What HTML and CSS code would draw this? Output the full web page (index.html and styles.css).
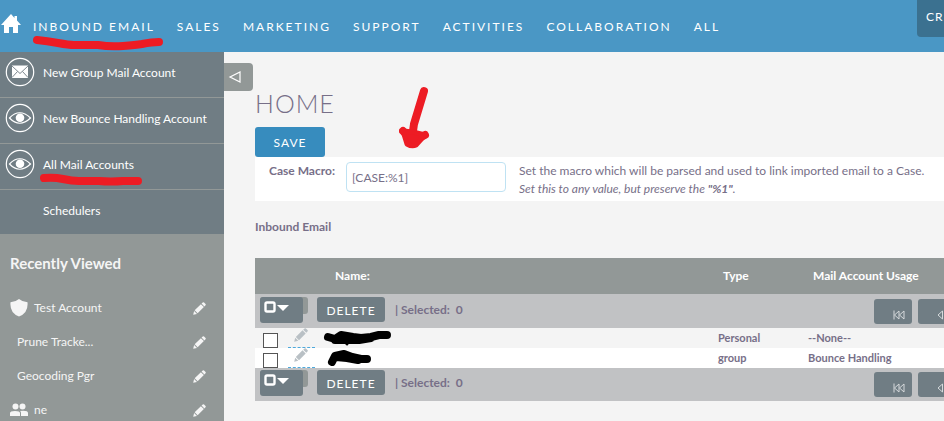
FILE: index.html
```html
<!DOCTYPE html>
<html lang="en">
<head>
<meta charset="utf-8">
<title>Inbound Email</title>
<link rel="stylesheet" href="styles.css">
</head>
<body>
<svg class="sprite" aria-hidden="true">
  <symbol id="pencil" viewBox="0 0 14 14"><path d="M0.2 13.8 1.2 9.7 4.3 12.8ZM1.8 9 8.5 2.3 11.7 5.5 5 12.2ZM9.2 1.7 10.5 0.5Q11.3 -.1 11.9 0.5L13.5 2.1Q14.1 2.7 13.5 3.5L12.3 4.8Z" fill="currentColor"/></symbol>
  <symbol id="eye" viewBox="0 0 30 30"><circle cx="15" cy="15" r="13.7" fill="none" stroke="#fff" stroke-width="1.2"/><path d="M4.5 15Q14.5 4.5 25.5 15Q14.5 25.5 4.5 15Z" fill="none" stroke="#fff" stroke-width="1.2"/><circle cx="15" cy="14.8" r="4.3" fill="#fff"/></symbol>
  <symbol id="mail" viewBox="0 0 30 30"><circle cx="15" cy="15" r="13.7" fill="none" stroke="#fff" stroke-width="1.2"/><path d="M7 8.5H23V21H7Z" fill="#fff"/><path d="M7 9 15 16.5 23 9M7 20.5 12.5 14.5M23 20.5 17.5 14.5" fill="none" stroke="#707d84" stroke-width=".9"/></symbol>
  <symbol id="first" viewBox="0 0 12 10"><path d="M1 0.5V9.5M6 1V9L1.5 5ZM11 1V9L6.5 5Z" fill="none" stroke="#d5d9db" stroke-width="1"/></symbol>
  <symbol id="prev" viewBox="0 0 6 10"><path d="M5.5 1V9L1 5Z" fill="none" stroke="#d5d9db" stroke-width="1"/></symbol>
  <symbol id="selectall" viewBox="0 0 26 12"><rect x="1.5" y="1.5" width="9" height="9" rx="1.5" fill="none" stroke="#fff" stroke-width="2.4"/><path d="M13 4H25L19 10Z" fill="#fff"/></symbol>
</svg>

<header class="topbar">
  <a class="home" href="#" aria-label="Home"><svg width="20" height="20" viewBox="0 0 20 20"><path d="M10 0 0 11H3V19H8V13H12V19H17V11H20L16 6.5V2H13.5V4Z" fill="#fff"/></svg></a>
  <nav class="menu">
    <a href="#">INBOUND EMAIL
      <svg class="mark mark-nav" width="134" height="16" viewBox="0 0 134 16" aria-hidden="true"><path d="M5 5Q15 6 26 8T42 10H66Q78 12 91 11T110 9Q120 7 127 7" /></svg>
    </a>
    <a href="#">SALES</a>
    <a href="#">MARKETING</a>
    <a href="#">SUPPORT</a>
    <a href="#">ACTIVITIES</a>
    <a href="#">COLLABORATION</a>
    <a href="#">ALL</a>
  </nav>
  <button class="create" type="button">CR</button>
</header>

<div class="page">
  <aside class="sidebar">
    <ul class="actions">
      <li><a href="#"><svg width="30" height="30"><use href="#mail"/></svg><span>New Group Mail Account</span></a></li>
      <li><a href="#"><svg width="30" height="30"><use href="#eye"/></svg><span>New Bounce Handling Account</span></a></li>
      <li><a href="#"><svg width="30" height="30"><use href="#eye"/></svg><span>All Mail Accounts</span></a>
        <svg class="mark mark-side" width="106" height="14" viewBox="0 0 106 14" aria-hidden="true"><path d="M5 5Q15 4 24 6T40 8H60Q72 9 84 8H99" /></svg></li>
      <li><a class="plain" href="#"><span>Schedulers</span></a></li>
    </ul>
    <button class="toggle" type="button" aria-label="Toggle sidebar"><svg width="14" height="14" viewBox="0 0 14 14"><path d="M12 2V12L2 7Z" fill="none" stroke="#fff" stroke-width="1.2"/></svg></button>
    <section class="recent">
      <h2>Recently Viewed</h2>
      <ul>
        <li><svg width="18" height="18" viewBox="0 0 18 18"><path d="M9 0Q13 3.3 17.5 3.3Q18.5 14 9 17.5Q-.5 14 .5 3.3Q5 3.3 9 0Z" fill="#f5f5f5"/></svg><a href="#">Test Account</a><a class="edit" href="#" aria-label="Edit"><svg width="13" height="13"><use href="#pencil"/></svg></a></li>
        <li><a class="bare" href="#">Prune Tracke...</a><a class="edit" href="#" aria-label="Edit"><svg width="13" height="13"><use href="#pencil"/></svg></a></li>
        <li><a class="bare" href="#">Geocoding Pgr</a><a class="edit" href="#" aria-label="Edit"><svg width="13" height="13"><use href="#pencil"/></svg></a></li>
        <li><svg width="18" height="14" viewBox="0 0 18 14"><g fill="#f5f5f5"><circle cx="5.5" cy="3.5" r="3"/><circle cx="12.5" cy="3.5" r="3"/><path d="M0 13V10Q0 8 5 8Q10 8 10 10V13ZM11 13V10Q11 8.6 10 8Q18 7.2 18 10V13Z"/></g></svg><a href="#">ne</a><a class="edit" href="#" aria-label="Edit"><svg width="13" height="13"><use href="#pencil"/></svg></a></li>
      </ul>
    </section>
  </aside>

  <main class="content">
    <h1>HOME</h1>
    <svg class="mark mark-arrow" width="32" height="68" viewBox="0 0 32 68" aria-hidden="true"><path d="M25 5 15 38 13 52"/><path d="M4 45 9 50M26 49 20 52"/><path class="tip" d="M4 45 14 46 26 49 17 59Q13 61 8 58Z"/></svg>
    <button class="save" type="button">SAVE</button>
    <form class="macro">
      <label for="macro">Case Macro:</label>
      <input id="macro" type="text" value="[CASE:%1]">
      <p>Set the macro which will be parsed and used to link imported email to a Case.<br><i>Set this to any value, but preserve the <b>"%1"</b>.</i></p>
    </form>
    <h3>Inbound Email</h3>
    <table class="list">
      <colgroup><col class="c-check"><col class="c-edit"><col class="c-name"><col class="c-type"><col></colgroup>
      <thead>
        <tr class="head"><th></th><th></th><th class="th-name">Name:</th><th>Type</th><th>Mail Account Usage</th></tr>
        <tr class="pager"><td colspan="5"><div class="bar">
          <span class="pick"><button type="button" aria-label="Select"><svg width="26" height="12"><use href="#selectall"/></svg></button></span>
          <button class="delete" type="button">DELETE</button>
          <span class="count">| Selected:&nbsp; 0</span>
          <span class="pages"><button type="button" aria-label="First"><svg width="12" height="10"><use href="#first"/></svg></button><button class="cut" type="button" aria-label="Previous"><svg width="6" height="10"><use href="#prev"/></svg></button></span>
        </div></td></tr>
      </thead>
      <tbody>
        <tr>
          <td><input type="checkbox" aria-label="Select row"></td>
          <td><a class="row-edit" href="#" aria-label="Edit"><svg width="14" height="14"><use href="#pencil"/></svg></a></td>
          <td><svg class="ink" width="70" height="16" viewBox="0 0 70 16" aria-hidden="true"><path d="M5 7 12 9 18 5 30 7 38 8 48 7 56 5 64 5M12 10H36L48 8"/><path d="M22 11 24 14" stroke-width="3"/></svg></td>
          <td>Personal</td><td>--None--</td>
        </tr>
        <tr>
          <td><input type="checkbox" aria-label="Select row"></td>
          <td><a class="row-edit" href="#" aria-label="Edit"><svg width="14" height="14"><use href="#pencil"/></svg></a></td>
          <td><svg class="ink" width="70" height="16" viewBox="0 0 70 16" aria-hidden="true"><path d="M9 12 12 6 21 4 29 7 38 9 44 9M13 7 24 8 35 10"/></svg></td>
          <td>group</td><td>Bounce Handling</td>
        </tr>
      </tbody>
      <tfoot>
        <tr class="pager"><td colspan="5"><div class="bar">
          <span class="pick"><button type="button" aria-label="Select"><svg width="26" height="12"><use href="#selectall"/></svg></button></span>
          <button class="delete" type="button">DELETE</button>
          <span class="count">| Selected:&nbsp; 0</span>
          <span class="pages"><button type="button" aria-label="First"><svg width="12" height="10"><use href="#first"/></svg></button><button class="cut" type="button" aria-label="Previous"><svg width="6" height="10"><use href="#prev"/></svg></button></span>
        </div></td></tr>
      </tfoot>
    </table>
  </main>
</div>
</body>
</html>
```
FILE: styles.css
```css
* { box-sizing: border-box; }
body {
  margin: 0;
  min-height: 100vh;
  display: flex;
  flex-direction: column;
  background: #f4f4f4;
  color: #776f88;
  font: 12px/18px Lato, sans-serif;
}
a { color: inherit; text-decoration: none; }
ul { list-style: none; margin: 0; padding: 0; }
button { font: inherit; border: 0; padding: 0; color: #fff; }
svg { display: block; flex: none; }
.sprite { position: absolute; width: 0; height: 0; }

.mark { position: absolute; fill: none; stroke: #ed1c24; stroke-width: 8; stroke-linecap: round; stroke-linejoin: round; }

.topbar { display: flex; align-items: flex-start; height: 52px; background: #4a97c5; color: #fff; }
.home { padding: 14px 0 0 1px; }
.menu { display: flex; gap: 22px; padding: 18px 0 0 12px; letter-spacing: 2px; white-space: nowrap; }
.menu a { position: relative; }
.mark-nav { left: -1px; top: 17px; }
.create { margin-left: auto; width: 27px; height: 37px; padding: 0 0 3px 9px; text-align: left; background: #3b7190; border-radius: 0 0 0 4px; letter-spacing: 1px; }

.page { flex: 1; display: flex; }
.sidebar { position: relative; flex: none; width: 224px; background: #929897; color: #fff; }
.actions { background: #707d84; }
.actions li { position: relative; height: 46px; border-bottom: 1px solid #929897; }
.actions li:last-child { height: 45px; }
.actions a { display: flex; gap: 8px; padding: 5px 0 0 5px; }
.actions span { padding-top: 7px; white-space: nowrap; }
.actions .plain { padding-left: 43px; }
.mark-side { left: 39px; top: 29px; }
.toggle { position: absolute; left: 100%; top: 11px; width: 29px; height: 28px; display: flex; align-items: center; padding-left: 4px; background: #929897; border-radius: 0 4px 4px 0; }
.recent { padding: 18px 18px 0 10px; color: #f5f5f5; }
.recent h2 { margin: 0 0 18px; font-size: 15px; line-height: 20px; font-weight: 700; }
.recent li { display: flex; align-items: center; gap: 6px; height: 34px; }
.recent .bare { padding-left: 7px; }
.edit { margin-left: auto; }

.content { flex: 1; min-width: 0; position: relative; padding: 35px 0 0 31px; }
h1 { margin: 0; font-size: 25px; line-height: 32px; font-weight: 300; letter-spacing: 1px; }
.mark-arrow { left: 175px; top: 34px; }
.mark-arrow .tip { fill: #ed1c24; stroke-width: 5; }
.save { display: block; width: 70px; height: 30px; margin-top: 8px; padding-top: 2px; background: #378cbe; border-radius: 3px; letter-spacing: 1px; }
.macro { display: flex; align-items: flex-start; height: 44px; padding: 5px 0 0 14px; background: #fff; }
.macro label { flex: none; width: 77px; font-weight: 700; }
.macro input { flex: none; width: 160px; height: 30px; padding: 0 5px; border: 1px solid #bfe2f3; border-radius: 4px; background: #fff; color: inherit; font: inherit; }
.macro p { margin: 0 0 0 13px; white-space: nowrap; }
h3 { margin: 17px 0 22px; font-size: 12px; line-height: 18px; font-weight: 700; }

.list { width: 100%; border-collapse: collapse; table-layout: fixed; font-size: 11px; font-weight: 700; }
.c-check { width: 30px; }
.c-edit { width: 38px; }
.c-name { width: 395px; }
.c-type { width: 90px; }
.list td, .list th { padding: 0; text-align: left; white-space: nowrap; }
.head { height: 36px; background: #929897; color: #fff; font-size: 12px; }
.list .head th { padding-left: 5px; }
.list .head .th-name { padding-left: 12px; }
.pager { background: #c1c2c4; }
.bar { display: flex; height: 34px; padding: 3px 0 0 5px; }
tfoot .bar { height: 33px; padding-top: 2px; }
.pick { width: 48px; height: 17px; background: #929897; border-radius: 3px; margin-right: 9px; }
.pick button { display: block; width: 43px; height: 26px; padding: 0 0 6px 4px; background: #707d84; border-radius: 3px; }
.delete { width: 68px; height: 25px; padding-top: 2px; background: #707d84; border-radius: 3px; font-size: 12px; font-weight: 400; letter-spacing: 1px; }
.count { padding: 4px 0 0 10px; font-size: 12px; }
.pages { margin-left: auto; display: flex; gap: 6px; padding-top: 2px; }
.pages button { width: 38px; height: 25px; padding: 7px 0 0 19px; background: #707d84; border-radius: 3px; }
.pages .cut { width: 26px; border-radius: 3px 0 0 3px; }
.list tbody tr { height: 20px; }
.list tbody tr:nth-child(2) { background: #fff; }
.list tbody input { appearance: none; display: block; width: 15px; height: 15px; margin: 4px 0 0 8px; border: 1px solid #555; background: #fff; }
.row-edit { display: block; width: 27px; height: 20px; margin-left: 3px; padding: 0 0 0 6px; border-bottom: 1px dashed #4ea9dc; color: #b9c0c5; }
.ink { fill: none; stroke: #000; stroke-width: 8; stroke-linecap: round; stroke-linejoin: round; }
```
